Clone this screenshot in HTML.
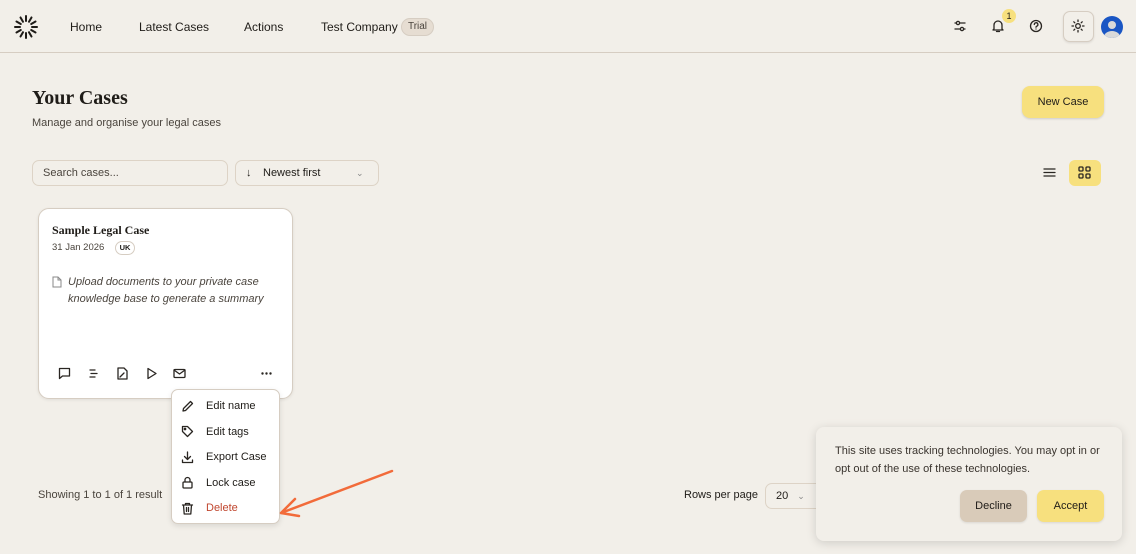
<!DOCTYPE html>
<html><head><meta charset="utf-8"><style>
*{box-sizing:border-box;margin:0;padding:0}
body{width:1136px;height:554px;overflow:hidden;background:#f2efe9;font-family:"Liberation Sans",sans-serif;color:#1f1c18;position:relative;font-size:12px}
.abs{position:absolute}
.nav{position:absolute;left:0;top:0;width:1136px;height:53px;border-bottom:1px solid #d6cdc2}
.nav span.l{position:absolute;top:20px;font-size:12px}
.serif{font-family:"Liberation Serif",serif;font-weight:bold}
svg{display:block}
.ic{fill:none;stroke:#2a2622;stroke-width:1.3;stroke-linecap:round;stroke-linejoin:round}
.card{position:absolute;left:38px;top:208px;width:255px;height:191px;background:#fff;border:1px solid #d6cdc2;border-radius:11px;box-shadow:0 1px 3px rgba(0,0,0,.08)}
.menu{position:absolute;left:171px;top:389px;width:109px;height:135px;background:#fff;border:1px solid #d6cdc2;border-radius:7px;box-shadow:0 2px 6px rgba(0,0,0,.1)}
.mi{position:absolute;left:34px;font-size:11px}
.cookie{position:absolute;left:816px;top:427px;width:306px;height:114px;background:#f2efe9;border-radius:8px;box-shadow:0 2px 10px rgba(0,0,0,.15)}
</style></head><body>
<div class="nav">
<svg class="abs" style="left:12px;top:13px" width="28" height="28" viewBox="-14 -14 28 28"><g stroke="#1f1c18" stroke-width="2" stroke-linecap="round">
<line x1="0" y1="-6" x2="0" y2="-11" transform="rotate(0)"/><line x1="0" y1="-6" x2="0" y2="-11" transform="rotate(30)"/><line x1="0" y1="-6" x2="0" y2="-11" transform="rotate(60)"/><line x1="0" y1="-6" x2="0" y2="-11" transform="rotate(90)"/><line x1="0" y1="-6" x2="0" y2="-11" transform="rotate(120)"/><line x1="0" y1="-6" x2="0" y2="-11" transform="rotate(150)"/><line x1="0" y1="-6" x2="0" y2="-11" transform="rotate(180)"/><line x1="0" y1="-6" x2="0" y2="-11" transform="rotate(210)"/><line x1="0" y1="-6" x2="0" y2="-11" transform="rotate(240)"/><line x1="0" y1="-6" x2="0" y2="-11" transform="rotate(270)"/><line x1="0" y1="-6" x2="0" y2="-11" transform="rotate(300)"/><line x1="0" y1="-6" x2="0" y2="-11" transform="rotate(330)"/></g></svg>
<span class="l" style="left:70px">Home</span>
<span class="l" style="left:139px">Latest Cases</span>
<span class="l" style="left:244px">Actions</span>
<span class="l" style="left:321px">Test Company</span>
<span class="abs" style="left:401px;top:18px;width:33px;height:18px;border-radius:9px;background:#e6ddd2;border:1px solid #d6cdc2;font-size:10px;text-align:center;line-height:16px;color:#4a443d">Trial</span>
<svg class="abs ic" style="left:953px;top:19px" width="14" height="14" viewBox="0 0 14 14"><line x1="2" y1="4" x2="12" y2="4"/><line x1="2" y1="10" x2="12" y2="10"/><circle cx="5" cy="4" r="1.6" fill="#f2efe9"/><circle cx="9" cy="10" r="1.6" fill="#f2efe9"/></svg>
<svg class="abs ic" style="left:991px;top:19px" width="14" height="14" viewBox="0 0 14 14"><path d="M3 10V6a4 4 0 0 1 8 0v4l1 1H2z M5.5 12.5h3"/></svg>
<span class="abs" style="left:1002px;top:9px;width:14px;height:14px;border-radius:7px;background:#f7e07e;font-size:9px;text-align:center;line-height:14px">1</span>
<svg class="abs ic" style="left:1029px;top:19px" width="14" height="14" viewBox="0 0 14 14"><circle cx="7" cy="7" r="5.5"/><path d="M5.3 5.5a1.8 1.8 0 1 1 2.4 1.7c-.5.2-.7.5-.7 1M7 10h0"/></svg>
<div class="abs" style="left:1063px;top:11px;width:31px;height:31px;border-radius:7px;border:1px solid #d6cdc2;background:#f2efe9;box-shadow:0 1px 2px rgba(0,0,0,.1)"></div>
<svg class="abs ic" style="left:1071px;top:19px" width="14" height="14" viewBox="0 0 14 14"><circle cx="7" cy="7" r="2.3"/><path d="M7 1v1.5M7 11.5V13M1 7h1.5M11.5 7H13M2.8 2.8l1 1M10.2 10.2l1 1M2.8 11.2l1-1M10.2 3.8l1-1"/></svg>
<svg class="abs" style="left:1101px;top:16px" width="22" height="22" viewBox="0 0 22 22"><clipPath id="c"><circle cx="11" cy="11" r="11"/></clipPath><circle cx="11" cy="11" r="11" fill="#1a56c4"/><g clip-path="url(#c)" fill="#d9d9d9"><circle cx="11" cy="9" r="4"/><ellipse cx="11" cy="21" rx="8" ry="6"/></g></svg>
</div>
<div class="abs serif" style="left:32px;top:87px;font-size:20px">Your Cases</div>
<div class="abs" style="left:32px;top:117px;font-size:11px;color:#4a443d">Manage and organise your legal cases</div>
<div class="abs" style="left:1022px;top:86px;width:82px;height:32px;border-radius:8px;background:#f7e07e;box-shadow:0 1px 2px rgba(0,0,0,.15);text-align:center;line-height:33px;font-size:11px">New Case</div>
<div class="abs" style="left:32px;top:160px;width:196px;height:26px;border:1px solid #ddd3c6;border-radius:7px;padding-left:10px;line-height:25px;font-size:11px;color:#4a443d">Search cases...</div>
<div class="abs" style="left:235px;top:160px;width:144px;height:26px;border:1px solid #ddd3c6;border-radius:7px;line-height:25px;font-size:11px"><span style="position:absolute;left:10px;font-size:11px">↓</span><span style="position:absolute;left:27px">Newest first</span><span style="position:absolute;left:120px;color:#888;font-size:9px">⌄</span></div>
<svg class="abs ic" style="left:1043px;top:166px" width="13" height="13" viewBox="0 0 13 13"><path d="M1 3h11M1 6.5h11M1 10h11"/></svg>
<div class="abs" style="left:1069px;top:160px;width:32px;height:26px;border-radius:6px;background:#f7e07e"></div>
<svg class="abs ic" style="left:1078px;top:166px" width="13" height="13" viewBox="0 0 13 13"><rect x="1" y="1" width="4" height="4" rx="1"/><rect x="8" y="1" width="4" height="4" rx="1"/><rect x="1" y="8" width="4" height="4" rx="1"/><rect x="8" y="8" width="4" height="4" rx="1"/></svg>
<div class="card">
<div class="abs serif" style="left:13px;top:14px;font-size:12px">Sample Legal Case</div>
<div class="abs" style="left:13px;top:33px;font-size:9.5px;color:#4a443d">31 Jan 2026</div>
<div class="abs" style="left:76px;top:32px;width:20px;height:14px;border:1px solid #d6cdc2;border-radius:7px;font-size:7.5px;text-align:center;line-height:12px;font-weight:bold">UK</div>
<svg class="abs" style="left:13px;top:67px" width="10" height="12" viewBox="0 0 10 12" fill="none" stroke="#888" stroke-width="1"><path d="M1 1h5l3 3v7H1z M6 1v3h3"/></svg>
<div class="abs" style="left:29px;top:65px;font-size:11px;font-style:italic;color:#4a443d;line-height:16.5px;width:220px">Upload documents to your private case knowledge base to generate a summary</div>
<svg class="abs ic" style="left:19px;top:158px" width="13" height="13" viewBox="0 0 13 13"><path d="M1.5 1.5h10v7.5H4.5L1.5 11.5z"/></svg>
<svg class="abs ic" style="left:48px;top:158px" width="13" height="13" viewBox="0 0 13 13"><path d="M3 3h5M4 6.5h6M3 10h5"/></svg>
<svg class="abs ic" style="left:77px;top:158px" width="13" height="13" viewBox="0 0 13 13"><path d="M2 1h6l3 3v8H2z M4 10l4-4"/></svg>
<svg class="abs ic" style="left:106px;top:158px" width="13" height="13" viewBox="0 0 13 13"><path d="M3 1.5l8 5-8 5z"/></svg>
<svg class="abs ic" style="left:134px;top:158px" width="13" height="13" viewBox="0 0 13 13"><rect x="1" y="2.5" width="11" height="8" rx="1"/><path d="M1 3l5.5 4 5.5-4"/></svg>
<svg class="abs" style="left:222px;top:163px" width="11" height="3" viewBox="0 0 11 3" fill="#2a2622"><circle cx="1.5" cy="1.5" r="1.2"/><circle cx="5.5" cy="1.5" r="1.2"/><circle cx="9.5" cy="1.5" r="1.2"/></svg>
</div>
<div class="menu">
<svg class="abs ic" style="left:9px;top:10px" width="13" height="13" viewBox="0 0 13 13"><path d="M2 11l.5-2.5 7-7 2 2-7 7z"/></svg><span class="mi" style="top:10px">Edit name</span>
<svg class="abs ic" style="left:9px;top:35px" width="13" height="13" viewBox="0 0 13 13"><path d="M1.5 1.5h5l5 5-5 5-5-5z"/><circle cx="4" cy="4" r=".7"/></svg><span class="mi" style="top:36px">Edit tags</span>
<svg class="abs ic" style="left:9px;top:61px" width="13" height="13" viewBox="0 0 13 13"><path d="M6.5 1v7M3.5 5.5l3 3 3-3M1.5 9v2.5h10V9"/></svg><span class="mi" style="top:61px">Export Case</span>
<svg class="abs ic" style="left:9px;top:86px" width="13" height="13" viewBox="0 0 13 13"><rect x="2" y="6" width="9" height="6" rx="1"/><path d="M4 6V4a2.5 2.5 0 0 1 5 0v2"/></svg><span class="mi" style="top:87px">Lock case</span>
<svg class="abs ic" style="left:9px;top:112px" width="13" height="13" viewBox="0 0 13 13"><path d="M1.5 3h10M4.5 3V1.5h4V3M2.5 3l.7 9h6.6l.7-9M5.5 5.5v4M7.5 5.5v4"/></svg><span class="mi" style="top:112px;color:#c0462e">Delete</span>
</div>
<div class="abs" style="left:38px;top:489px;font-size:11px;color:#4a443d">Showing 1 to 1 of 1 result</div>
<div class="abs" style="left:684px;top:489px;font-size:11px">Rows per page</div>
<div class="abs" style="left:765px;top:483px;width:60px;height:26px;border:1px solid #ddd3c6;border-radius:7px;font-size:11px;line-height:24px;padding-left:10px">20 <span style="color:#888;font-size:9px;margin-left:6px">⌄</span></div>
<svg class="abs" style="left:270px;top:465px" width="130" height="56" viewBox="270 465 130 56"><g stroke="#f26b3a" stroke-width="2.5" fill="none" stroke-linecap="round"><path d="M392 471L281 513M281 513l14-14M281 513l18 3"/></g></svg>
<div class="cookie">
<div class="abs" style="left:19px;top:15px;width:272px;font-size:11px;line-height:18px;color:#3a342e">This site uses tracking technologies. You may opt in or opt out of the use of these technologies.</div>
<div class="abs" style="left:144px;top:63px;width:67px;height:32px;border-radius:7px;background:#d9cbb9;text-align:center;line-height:33px;font-size:11px;box-shadow:0 1px 2px rgba(0,0,0,.1)">Decline</div>
<div class="abs" style="left:221px;top:63px;width:67px;height:32px;border-radius:7px;background:#f7e07e;text-align:center;line-height:33px;font-size:11px;box-shadow:0 1px 2px rgba(0,0,0,.1)">Accept</div>
</div>
</body></html>
